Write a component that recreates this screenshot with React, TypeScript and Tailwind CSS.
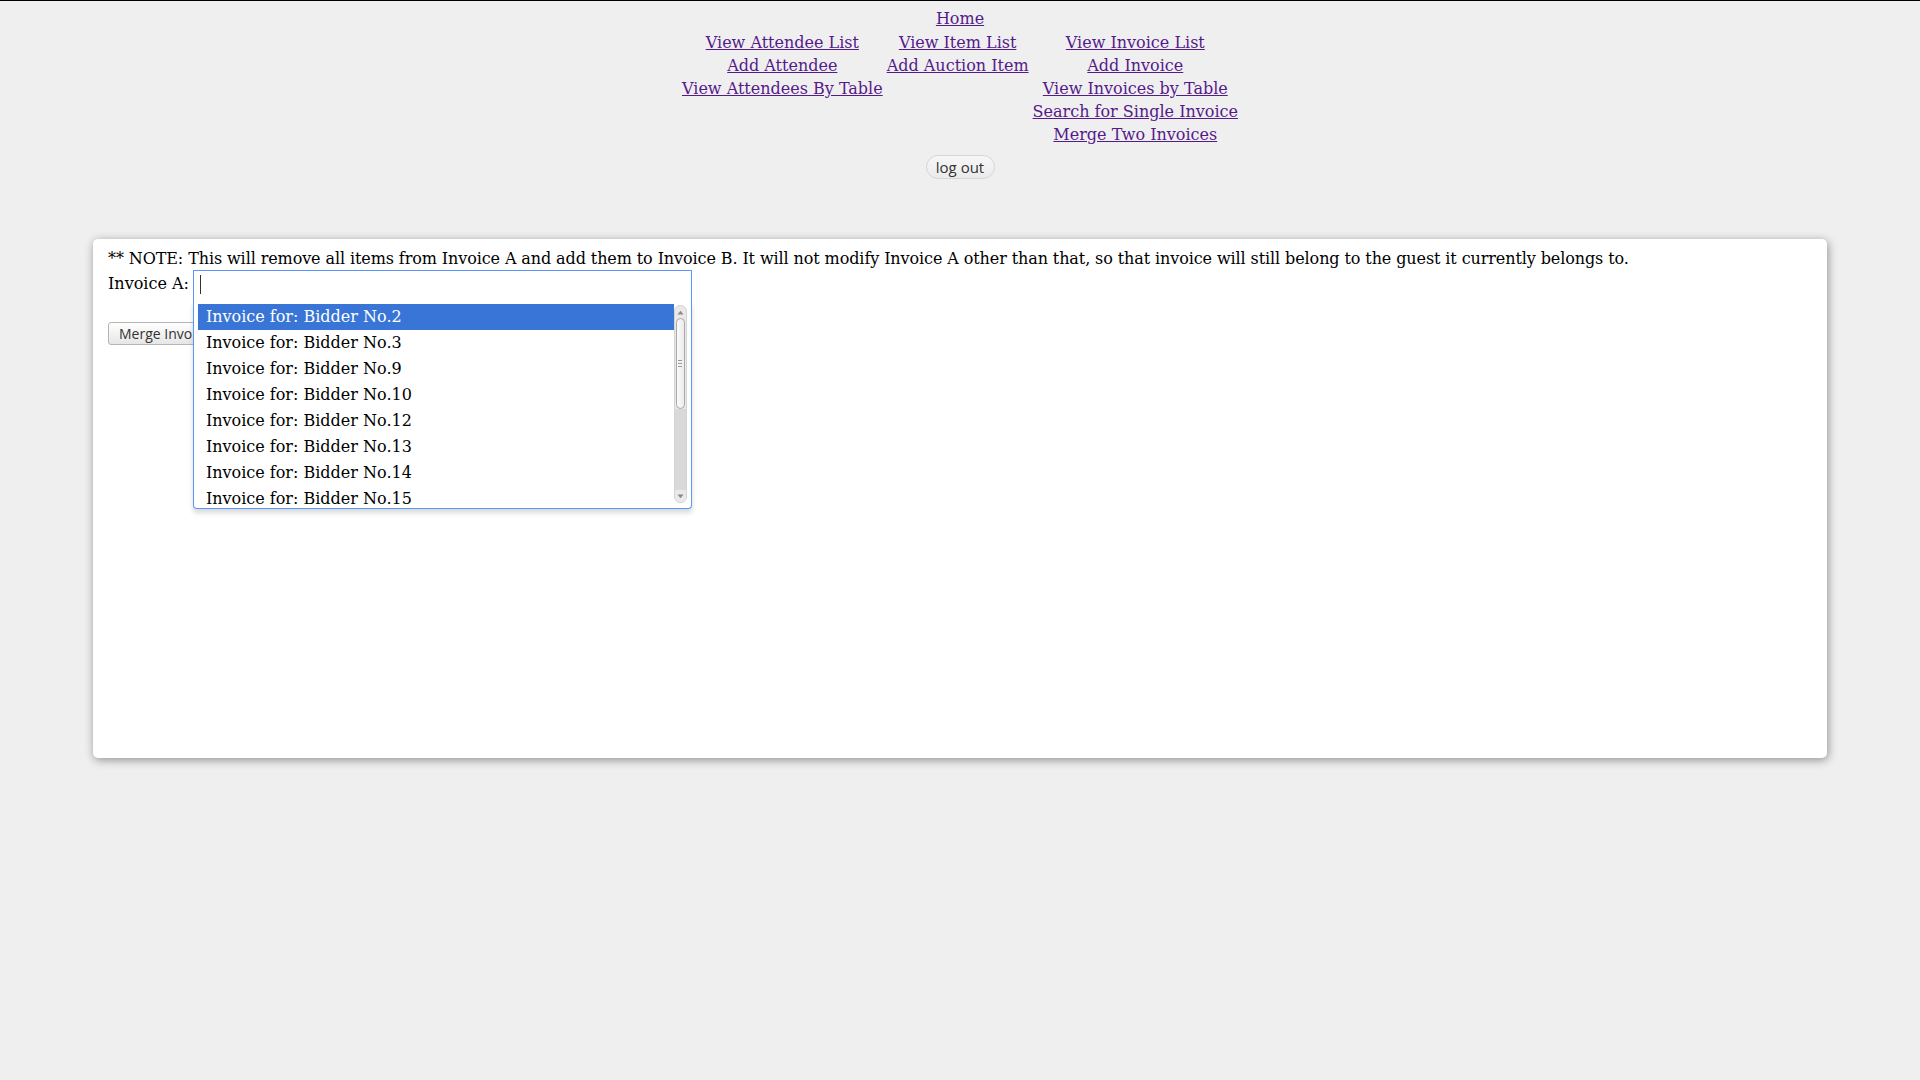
import React from "react";

const serif = { fontFamily: '"DejaVu Serif", "Liberation Serif", serif' };
const sans = { fontFamily: '"Open Sans", "DejaVu Sans", sans-serif' };

function NavLink({ children }: { children?: React.ReactNode }) {
  if (!children) return <span />;
  return (
    <a href="#" className="text-[#551a8b] underline text-center whitespace-nowrap">
      {children}
    </a>
  );
}

const rows: string[][] = [
  ["View Attendee List", "View Item List", "View Invoice List"],
  ["Add Attendee", "Add Auction Item", "Add Invoice"],
  ["View Attendees By Table", "", "View Invoices by Table"],
  ["", "", "Search for Single Invoice"],
  ["", "", "Merge Two Invoices"],
];

const items = [2, 3, 9, 10, 12, 13, 14, 15, 16, 17, 18, 19, 20, 21, 22, 23];

function Scrollbar() {
  return (
    <div className="w-[13px] flex flex-col border border-[#d4d4d4] rounded-[6px] bg-[#e9e9e9] mt-px mb-[5px] overflow-hidden">
      <div className="h-[12px] flex items-center justify-center">
        <svg width="7" height="5" viewBox="0 0 7 5">
          <path d="M0.5 4.5 L3.5 0.8 L6.5 4.5 Z" fill="#8a8a8a" />
        </svg>
      </div>
      <div className="h-[91px] mx-px rounded-[6px] border border-[#a9a9a9] bg-gradient-to-r from-[#fbfbfb] to-[#ececec] flex items-center justify-center">
        <div className="flex flex-col gap-[2px]">
          <div className="w-[4px] h-px bg-[#9a9a9a]" />
          <div className="w-[4px] h-px bg-[#9a9a9a]" />
          <div className="w-[4px] h-px bg-[#9a9a9a]" />
        </div>
      </div>
      <div className="flex-1 bg-[#d9d9d9]" />
      <div className="h-[12px] flex items-center justify-center bg-[#e9e9e9]">
        <svg width="7" height="5" viewBox="0 0 7 5">
          <path d="M0.5 0.5 L3.5 4.2 L6.5 0.5 Z" fill="#8a8a8a" />
        </svg>
      </div>
    </div>
  );
}

export default function App() {
  return (
    <div
      className="min-h-screen bg-[#efefef] border-t border-black text-[16px] text-black pb-10"
      style={serif}
    >
      <div className="flex flex-col items-center pt-[6px]">
        <div className="leading-[23px]">
          <NavLink>Home</NavLink>
        </div>
        <div className="grid grid-cols-[auto_auto_auto] gap-x-[2px] leading-[23px] mt-px">
          {rows.map((r, i) =>
            r.map((c, j) => (
              <div key={`${i}-${j}`} className="text-center px-px">
                <NavLink>{c}</NavLink>
              </div>
            ))
          )}
        </div>
        <button
          className="mt-[9px] h-[24px] w-[69px] rounded-full border border-[#d6d6d6] bg-gradient-to-b from-[#f7f7f7] to-[#ebebeb] text-[#333] text-[15px] leading-none flex items-center justify-center"
          style={sans}
        >
          log out
        </button>
      </div>

      <div className="mx-[93px] mt-[60px] h-[519px] bg-white rounded-[5px] shadow-[1px_2px_10px_rgba(0,0,0,0.4)] px-[15px] pt-[10px]">
        <div className="leading-[20px] whitespace-nowrap tracking-[-0.1px]">
          ** NOTE: This will remove all items from Invoice A and add them to Invoice B. It will not modify Invoice A other than that, so that invoice will still belong to the guest it currently belongs to.
        </div>
        <div className="flex items-start mt-px">
          <span className="leading-[20px] mt-[4px] whitespace-nowrap">Invoice A:</span>
          <div className="relative ml-[4px] w-[499px] h-[31px] border border-b-0 border-[#5897fb] bg-white z-10">
            <div className="absolute left-[6px] top-[4px] w-px h-[19px] bg-[#333]" />
            <div className="absolute left-[-1px] right-[-1px] top-full h-[208px] bg-white border border-t-0 border-[#5897fb] rounded-b-[4px] shadow-[0_4px_5px_rgba(0,0,0,0.15)] flex pl-[4px] pr-[4px] pt-[3px]">
              <div className="flex-1 overflow-hidden">
                {items.map((n, i) => (
                  <div
                    key={n}
                    className={`h-[26px] leading-[26px] pl-[8px] whitespace-nowrap ${
                      i === 0 ? "bg-[#3875d7] text-white" : "text-black"
                    }`}
                  >
                    Invoice for: Bidder No.{n}
                  </div>
                ))}
              </div>
              <Scrollbar />
            </div>
          </div>
        </div>
        <button
          className="mt-[21px] h-[23px] px-[10px] rounded-[3px] border border-[#b5b5b5] bg-gradient-to-b from-white to-[#e6e6e6] text-[#333] text-[14px] leading-none"
          style={sans}
        >
          Merge Invoices
        </button>
      </div>
    </div>
  );
}
